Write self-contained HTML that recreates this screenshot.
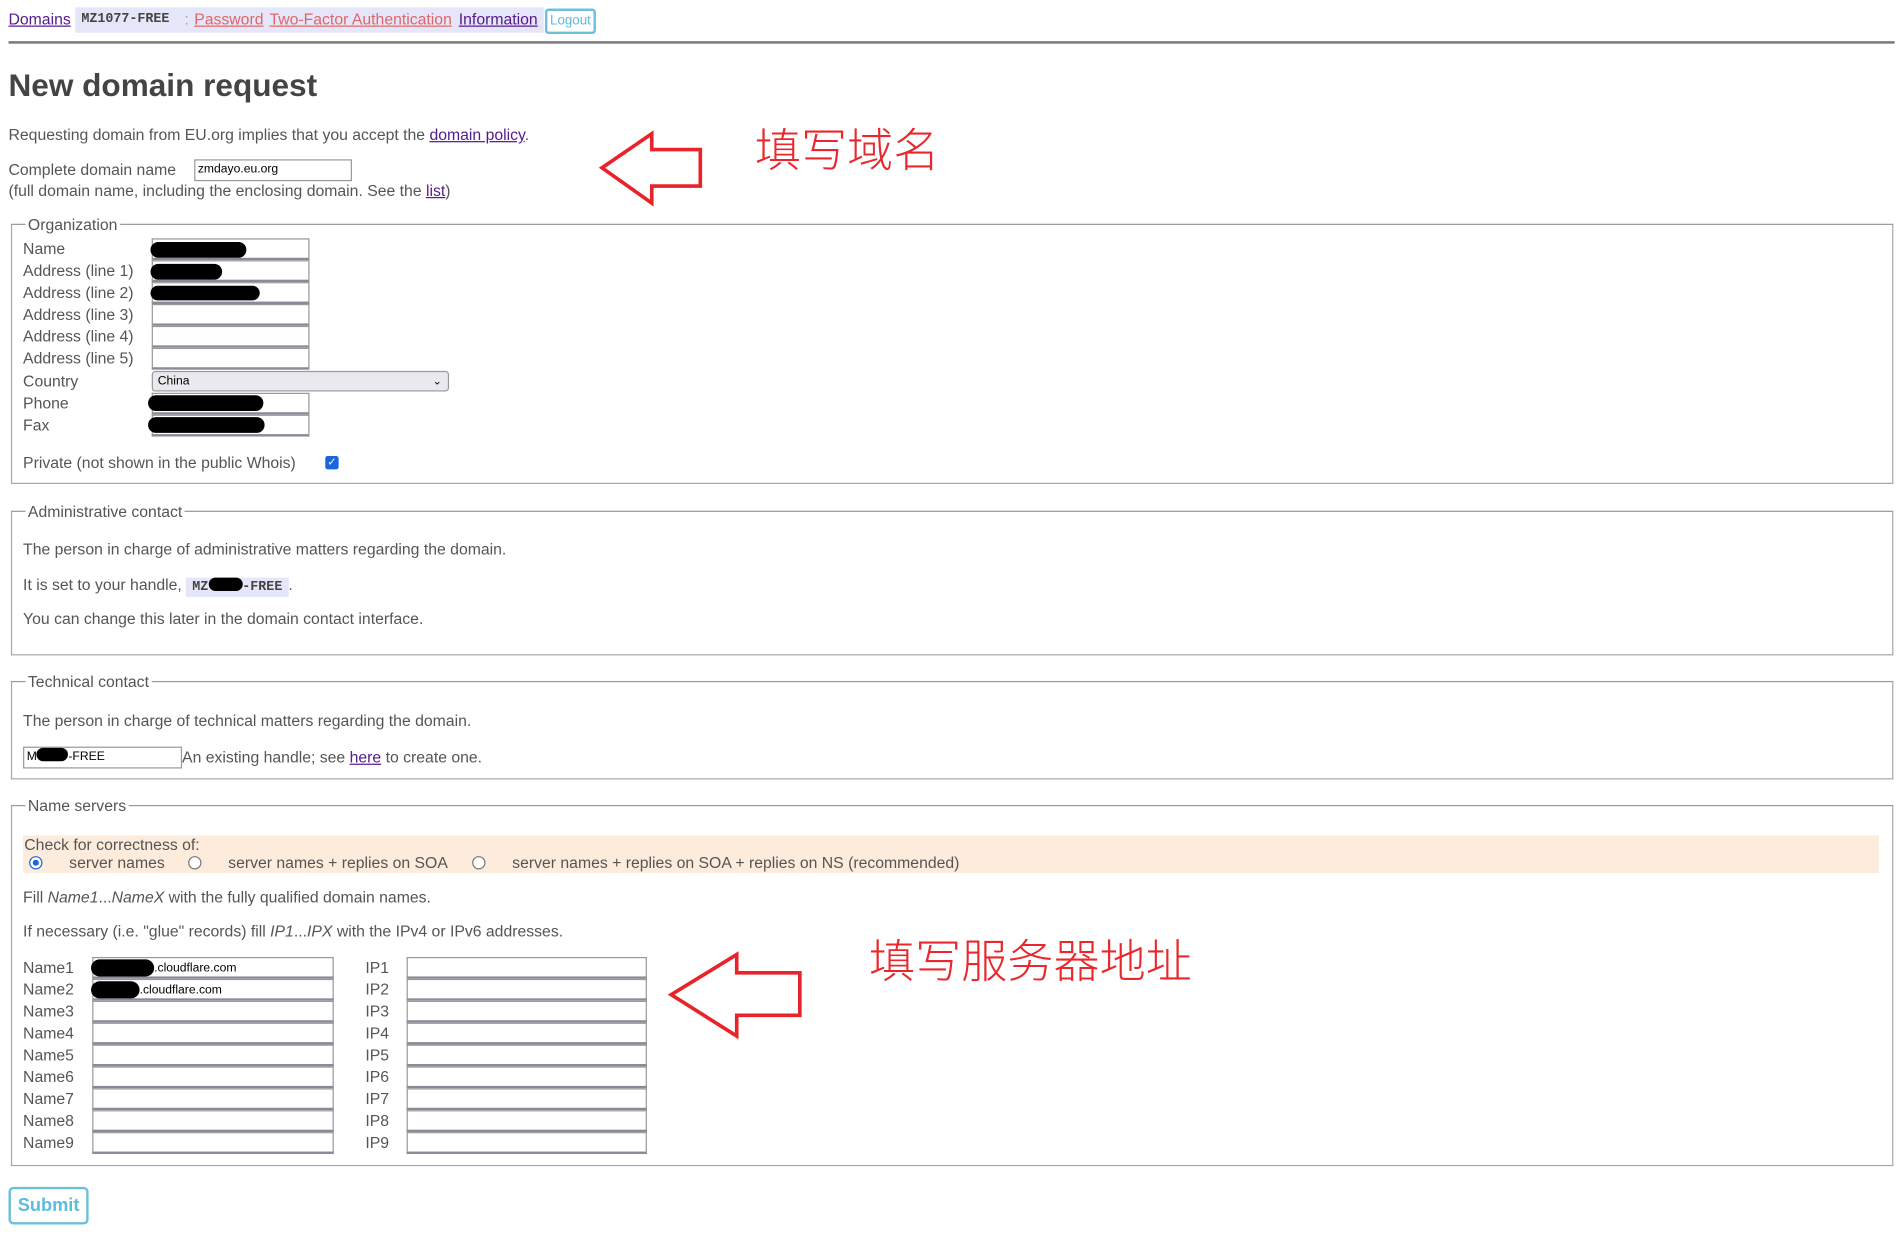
<!DOCTYPE html>
<html><head><meta charset="utf-8"><style>
html,body{margin:0;padding:0;background:#fff;overflow:hidden;width:1903px;height:1250px}
#w{position:absolute;left:0;top:0;width:1568px;height:1028px;transform-origin:0 0;transform:scale(1.2137,1.216);font-family:"Liberation Sans",Arial,sans-serif;font-size:13px;color:#555}
.a{position:absolute;white-space:nowrap;line-height:15px}
.l{color:#551a8b;text-decoration:underline}
.r{color:#e06666;text-decoration:underline}
.fs{position:absolute;border:1px solid #a8a8a8;border-top-color:#999}
.lg{position:absolute;background:#fff;padding:0 2px;top:-8px;left:11px;line-height:15px}
.in{position:absolute;border:1px solid #999;border-bottom:2px solid #8a8a99;background:#fff;box-sizing:border-box;font-size:10px;color:#000;line-height:15px;padding-left:2px}
.bl{position:absolute;background:#000;border-radius:8px}
.rd{position:absolute;width:9px;height:9px;border:1px solid #777;border-radius:50%;background:#fff}
.cn{position:absolute;color:#e8282d;font-family:"Noto Sans CJK SC","WenQuanYi Zen Hei",sans-serif;font-weight:300;white-space:nowrap;line-height:1}
</style></head><body><div id="w">
<!-- nav -->
<div class="a" style="left:62px;top:6px;width:386px;height:21px;background:#e6e6fa"></div>
<span class="a l" style="left:7px;top:8px">Domains</span>
<span class="a" style="left:67px;top:9px;font-family:'Liberation Mono',monospace;font-weight:bold;font-size:11px;color:#444">MZ1077-FREE</span>
<span class="a" style="left:152px;top:8px;color:#aaa">:</span>
<span class="a r" style="left:160px;top:8px">Password</span>
<span class="a r" style="left:222px;top:8px">Two-Factor Authentication</span>
<span class="a l" style="left:378px;top:8px">Information</span>
<div class="a" style="left:449px;top:7px;width:38px;height:17px;border:2px solid #6cc0dc;border-radius:3px;background:#fff;color:#5bbcdc;font-size:11px;line-height:17px;text-align:center">Logout</div>
<div class="a" style="left:7px;top:34px;width:1554px;height:1px;background:#555;border-bottom:1px solid #aaa"></div>
<!-- heading -->
<div class="a" style="left:7px;top:55px;font-size:26px;font-weight:bold;color:#444;line-height:30px">New domain request</div>
<div class="a" style="left:7px;top:103px">Requesting domain from EU.org implies that you accept the <span class="l">domain policy</span>.</div>
<div class="a" style="left:7px;top:132px">Complete domain name</div>
<div class="in" style="left:160px;top:131px;width:130px;height:18px;border-bottom:1px solid #999">zmdayo.eu.org</div>
<div class="a" style="left:7px;top:149px">(full domain name, including the enclosing domain. See the <span class="l">list</span>)</div>
<!-- arrow1 -->
<svg class="a" style="left:490px;top:105px" width="95" height="68"><path d="M6 33 L47 5 L47 18 L87 18 L87 48 L47 48 L47 62 Z" fill="none" stroke="#e8232a" stroke-width="3" stroke-linejoin="miter"/></svg>
<div class="cn" style="left:622px;top:102px;font-size:38px">填写域名</div>
<!-- organization -->
<div class="fs" style="left:9px;top:184px;width:1549px;height:212px"><span class="lg">Organization</span></div>
<div class="a" style="left:19px;top:197px">Name</div>
<div class="a" style="left:19px;top:215px">Address (line 1)</div>
<div class="a" style="left:19px;top:233px">Address (line 2)</div>
<div class="a" style="left:19px;top:251px">Address (line 3)</div>
<div class="a" style="left:19px;top:269px">Address (line 4)</div>
<div class="a" style="left:19px;top:287px">Address (line 5)</div>
<div class="a" style="left:19px;top:306px">Country</div>
<div class="a" style="left:19px;top:324px">Phone</div>
<div class="a" style="left:19px;top:342px">Fax</div>
<div class="in" style="left:125px;top:196px;width:130px;height:18px"></div>
<div class="in" style="left:125px;top:214px;width:130px;height:18px"></div>
<div class="in" style="left:125px;top:232px;width:130px;height:18px"></div>
<div class="in" style="left:125px;top:250px;width:130px;height:18px"></div>
<div class="in" style="left:125px;top:268px;width:130px;height:18px"></div>
<div class="in" style="left:125px;top:286px;width:130px;height:18px"></div>
<div class="in" style="left:125px;top:305px;width:245px;height:17px;background:#e9e9ee;border:1px solid #999;border-radius:3px;padding-left:4px">China<span style="position:absolute;right:5px;top:0;font-size:9px">&#8964;</span></div>
<div class="in" style="left:125px;top:323px;width:130px;height:18px"></div>
<div class="in" style="left:125px;top:341px;width:130px;height:18px"></div>
<div class="bl" style="left:124px;top:199px;width:79px;height:13px"></div>
<div class="bl" style="left:124px;top:217px;width:59px;height:13px"></div>
<div class="bl" style="left:124px;top:235px;width:90px;height:12px"></div>
<div class="bl" style="left:122px;top:325px;width:95px;height:13px"></div>
<div class="bl" style="left:122px;top:343px;width:96px;height:13px"></div>
<div class="a" style="left:19px;top:373px">Private (not shown in the public Whois)</div>
<div class="a" style="left:268px;top:375px;width:11px;height:11px;background:#1a66d9;border-radius:2px;color:#fff;font-size:9px;line-height:11px;text-align:center">&#10003;</div>
<!-- admin -->
<div class="fs" style="left:9px;top:420px;width:1549px;height:117px"><span class="lg">Administrative contact</span></div>
<div class="a" style="left:19px;top:444px">The person in charge of administrative matters regarding the domain.</div>
<div class="a" style="left:19px;top:473px">It is set to your handle, <span style="display:inline-block;background:#e6e6fa;padding:0 5px;font-family:'Liberation Mono',monospace;font-weight:bold;font-size:11px;color:#444;position:relative">MZ<span style="display:inline-block;width:28px;height:11px;background:#000;border-radius:6px;vertical-align:-1px"></span>-FREE</span>.</div>
<div class="a" style="left:19px;top:501px">You can change this later in the domain contact interface.</div>
<!-- tech -->
<div class="fs" style="left:9px;top:560px;width:1549px;height:79px"><span class="lg">Technical contact</span></div>
<div class="a" style="left:19px;top:585px">The person in charge of technical matters regarding the domain.</div>
<div class="in" style="left:19px;top:614px;width:131px;height:18px;border-bottom:1px solid #999">M<span style="display:inline-block;width:26px;height:11px;background:#000;border-radius:6px;vertical-align:-1px"></span>-FREE</div>
<div class="a" style="left:150px;top:615px">An existing handle; see <span class="l">here</span> to create one.</div>
<!-- ns -->
<div class="fs" style="left:9px;top:662px;width:1549px;height:295px"><span class="lg">Name servers</span></div>
<div class="a" style="left:19px;top:687px;width:1529px;height:31px;background:#fdebdb"></div>
<div class="a" style="left:20px;top:687px">Check for correctness of:</div>
<div class="rd" style="left:24px;top:704px;border-color:#1a66d9"><div style="position:absolute;left:2px;top:2px;width:5px;height:5px;border-radius:50%;background:#1a66d9"></div></div>
<div class="a" style="left:57px;top:702px">server names</div>
<div class="rd" style="left:155px;top:704px"></div>
<div class="a" style="left:188px;top:702px">server names + replies on SOA</div>
<div class="rd" style="left:389px;top:704px"></div>
<div class="a" style="left:422px;top:702px">server names + replies on SOA + replies on NS (recommended)</div>
<div class="a" style="left:19px;top:730px">Fill <i>Name1</i>...<i>NameX</i> with the fully qualified domain names.</div>
<div class="a" style="left:19px;top:758px">If necessary (i.e. "glue" records) fill <i>IP1</i>...<i>IPX</i> with the IPv4 or IPv6 addresses.</div>
<div id="rows"></div>
<!-- arrow2 -->
<svg class="a" style="left:547px;top:780px" width="120" height="78"><path d="M6 38 L60 5 L60 20 L112 20 L112 55 L60 55 L60 72 Z" fill="none" stroke="#e8232a" stroke-width="3"/></svg>
<div class="cn" style="left:716px;top:769px;font-size:38px">填写服务器地址</div>
<!-- submit -->
<div class="a" style="left:7px;top:976px;width:62px;height:27px;border:2px solid #6cc0dc;border-radius:4px;background:#fff;color:#5bbcdc;font-weight:bold;font-size:15px;line-height:27px;text-align:center">Submit</div>
<div class="a" style="left:19px;top:788px">Name1</div><div class="in" style="left:76px;top:787px;width:199px;height:18px"></div><div class="a" style="left:301px;top:788px">IP1</div><div class="in" style="left:335px;top:787px;width:198px;height:18px"></div>
<div class="a" style="left:19px;top:806px">Name2</div><div class="in" style="left:76px;top:805px;width:199px;height:18px"></div><div class="a" style="left:301px;top:806px">IP2</div><div class="in" style="left:335px;top:805px;width:198px;height:18px"></div>
<div class="a" style="left:19px;top:824px">Name3</div><div class="in" style="left:76px;top:823px;width:199px;height:18px"></div><div class="a" style="left:301px;top:824px">IP3</div><div class="in" style="left:335px;top:823px;width:198px;height:18px"></div>
<div class="a" style="left:19px;top:842px">Name4</div><div class="in" style="left:76px;top:841px;width:199px;height:18px"></div><div class="a" style="left:301px;top:842px">IP4</div><div class="in" style="left:335px;top:841px;width:198px;height:18px"></div>
<div class="a" style="left:19px;top:860px">Name5</div><div class="in" style="left:76px;top:859px;width:199px;height:18px"></div><div class="a" style="left:301px;top:860px">IP5</div><div class="in" style="left:335px;top:859px;width:198px;height:18px"></div>
<div class="a" style="left:19px;top:878px">Name6</div><div class="in" style="left:76px;top:877px;width:199px;height:18px"></div><div class="a" style="left:301px;top:878px">IP6</div><div class="in" style="left:335px;top:877px;width:198px;height:18px"></div>
<div class="a" style="left:19px;top:896px">Name7</div><div class="in" style="left:76px;top:895px;width:199px;height:18px"></div><div class="a" style="left:301px;top:896px">IP7</div><div class="in" style="left:335px;top:895px;width:198px;height:18px"></div>
<div class="a" style="left:19px;top:914px">Name8</div><div class="in" style="left:76px;top:913px;width:199px;height:18px"></div><div class="a" style="left:301px;top:914px">IP8</div><div class="in" style="left:335px;top:913px;width:198px;height:18px"></div>
<div class="a" style="left:19px;top:932px">Name9</div><div class="in" style="left:76px;top:931px;width:199px;height:18px"></div><div class="a" style="left:301px;top:932px">IP9</div><div class="in" style="left:335px;top:931px;width:198px;height:18px"></div>
<div class="bl" style="left:75px;top:789px;width:52px;height:14px"></div>
<div class="a" style="left:127px;top:789px;font-size:10px;color:#000">.cloudflare.com</div>
<div class="bl" style="left:75px;top:807px;width:40px;height:14px"></div>
<div class="a" style="left:115px;top:807px;font-size:10px;color:#000">.cloudflare.com</div>
</div></body></html>
